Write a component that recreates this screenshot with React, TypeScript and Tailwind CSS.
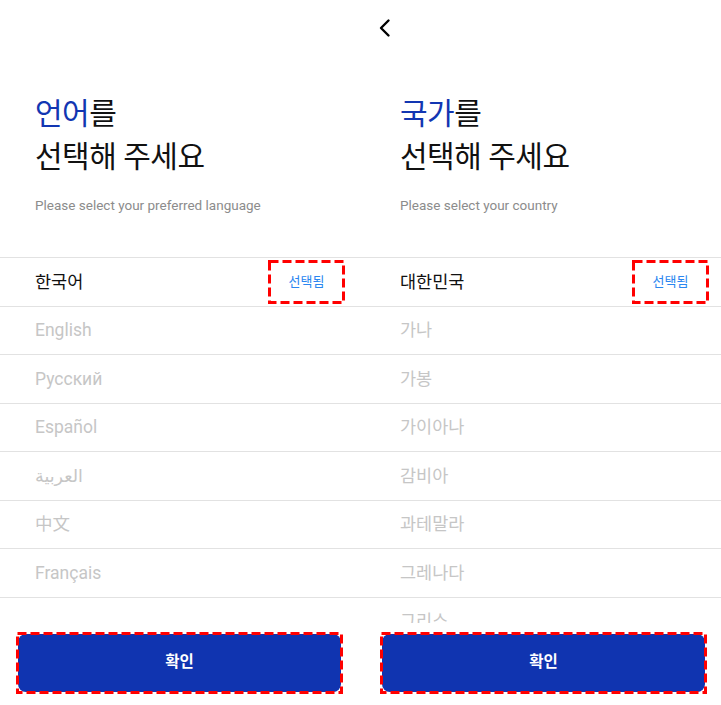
import React from "react";

const FONT = { fontFamily: "Roboto, 'Noto Sans CJK KR', 'DejaVu Sans', sans-serif" };

type Row = { label: string; selected?: boolean };

function DashBox({ w, h }: { w: number; h: number }) {
  return (
    <svg width={w} height={h} className="pointer-events-none absolute left-0 top-0">
      <rect
        x={1.5}
        y={1.5}
        width={w - 3}
        height={h - 3}
        fill="none"
        stroke="#ff0000"
        strokeWidth={3}
        strokeDasharray="9 4"
      />
    </svg>
  );
}

function ListRow({ row, padRight }: { row: Row; padRight: string }) {
  return (
    <div className={`flex h-[48.5px] items-center border-b border-[#e2e2e2] pl-[35px] ${padRight}`}>
      <span className={`flex-1 text-[17.5px] ${row.selected ? "text-[#111111]" : "text-[#c6c6c6]"}`}>{row.label}</span>
      {row.selected && (
        <div className="relative flex h-[44px] w-[77px] items-center justify-center">
          <span className="text-[13px] text-[#2a86f0]">선택됨</span>
          <DashBox w={77} h={44} />
        </div>
      )}
    </div>
  );
}

function Panel({
  blue,
  rest,
  subtitle,
  rows,
  back,
  width,
  padRight,
  btnMl,
}: {
  blue: string;
  rest: string;
  subtitle: string;
  rows: Row[];
  back?: boolean;
  width: string;
  padRight: string;
  btnMl: string;
}) {
  return (
    <div className={`flex h-[705px] flex-col ${width}`}>
      <div className="flex h-[56px] items-center pl-[12px]">
        {back && (
          <svg width="16" height="22" viewBox="0 0 16 22">
            <path d="M11.5 3.5 L4 11 L11.5 18.5" fill="none" stroke="#000" strokeWidth="2.4" strokeLinecap="round" strokeLinejoin="round" />
          </svg>
        )}
      </div>
      <div className="pl-[35px] pt-[36px]">
        <div className="text-[30px] leading-[43px] tracking-[-0.5px] text-[#111111]">
          <span className="text-[#1236b2]">{blue}</span>
          {rest}
        </div>
        <div className="text-[30px] leading-[43px] tracking-[-0.5px] text-[#111111]">선택해 주세요</div>
        <div className="mt-[17px] text-[13.5px] leading-[20px] text-[#8c8c8c]">{subtitle}</div>
      </div>
      <div className="mt-[42px] h-[366px] overflow-hidden border-t border-[#e2e2e2]">
        {rows.map((r) => (
          <ListRow key={r.label} row={r} padRight={padRight} />
        ))}
      </div>
      <div className={`relative mt-[9px] h-[62px] w-[327px] p-[2px] ${btnMl}`}>
        <button className="flex h-full w-full items-center justify-center rounded-[8px] bg-[#1034b0] text-[15.5px] font-bold text-white">
          확인
        </button>
        <DashBox w={327} h={62} />
      </div>
    </div>
  );
}

export default function App() {
  const langs: Row[] = [
    { label: "한국어", selected: true },
    { label: "English" },
    { label: "Русский" },
    { label: "Español" },
    { label: "العربية" },
    { label: "中文" },
    { label: "Français" },
  ];
  const countries: Row[] = [
    { label: "대한민국", selected: true },
    { label: "가나" },
    { label: "가봉" },
    { label: "가이아나" },
    { label: "감비아" },
    { label: "과테말라" },
    { label: "그레나다" },
    { label: "그리스" },
    { label: "기니" },
  ];
  return (
    <div className="flex h-[705px] w-[721px] overflow-hidden bg-white" style={FONT}>
      <Panel
        blue="언어"
        rest="를"
        subtitle="Please select your preferred language"
        rows={langs}
        width="w-[365px]"
        padRight="pr-[20px]"
        btnMl="ml-[16px]"
      />
      <Panel
        blue="국가"
        rest="를"
        subtitle="Please select your country"
        rows={countries}
        back
        width="w-[356px]"
        padRight="pr-[12px]"
        btnMl="ml-[15px]"
      />
    </div>
  );
}
